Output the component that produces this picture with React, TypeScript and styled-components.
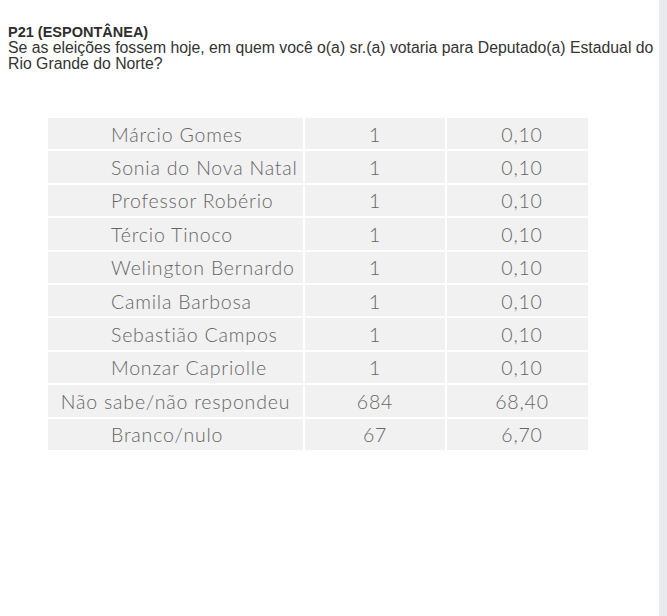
import React from "react";
import styled, { createGlobalStyle } from "styled-components";

const Global = createGlobalStyle`
  html, body {
    margin: 0;
    padding: 0;
    background: #ffffff;
  }
`;

const Page = styled.div`
  display: flex;
  width: 667px;
  height: 616px;
`;

const Main = styled.div`
  flex: 1;
  padding: 24px 0 0 8px;
`;

const Rail = styled.div`
  width: 8px;
  background: #e9eaee;
`;

const Title = styled.div`
  font-family: "Liberation Sans", Arial, sans-serif;
  font-weight: 700;
  font-size: 14.5px;
  line-height: 16px;
  color: #2e2e2e;
`;

const Question = styled.div`
  font-family: "Liberation Sans", Arial, sans-serif;
  font-size: 15.8px;
  line-height: 16px;
  color: #333333;
`;

const Table = styled.table`
  margin: 44px 0 0 38px;
  border-collapse: separate;
  border-spacing: 2px;
  font-family: Lato, "Open Sans", sans-serif;
  font-weight: 300;
  font-size: 19.5px;
  letter-spacing: 0.8px;
  color: #666666;
`;

const Cell = styled.td<{ $w: number; $align?: string; $pad?: number }>`
  width: ${(p) => p.$w}px;
  height: 31.4px;
  padding: 1px 0 0 ${(p) => p.$pad ?? 0}px;
  box-sizing: border-box;
  background: #f1f1f1;
  text-align: ${(p) => p.$align ?? "center"};
  white-space: nowrap;
`;

const rows: [string, string, string, boolean?][] = [
  ["Márcio Gomes", "1", "0,10"],
  ["Sonia do Nova Natal", "1", "0,10"],
  ["Professor Robério", "1", "0,10"],
  ["Tércio Tinoco", "1", "0,10"],
  ["Welington Bernardo", "1", "0,10"],
  ["Camila Barbosa", "1", "0,10"],
  ["Sebastião Campos", "1", "0,10"],
  ["Monzar Capriolle", "1", "0,10"],
  ["Não sabe/não respondeu", "684", "68,40", true],
  ["Branco/nulo", "67", "6,70"],
];

export default function App() {
  return (
    <Page>
      <Global />
      <Main>
        <Title>P21 (ESPONTÂNEA)</Title>
        <Question>
          Se as eleições fossem hoje, em quem você o(a) sr.(a) votaria para Deputado(a) Estadual do
          <br />
          Rio Grande do Norte?
        </Question>
        <Table>
          <tbody>
            {rows.map(([name, n, pct, wide]) => (
              <tr key={name}>
                <Cell $w={255} $align={wide ? "center" : "left"} $pad={wide ? 0 : 63}>
                  {name}
                </Cell>
                <Cell $w={140}>{n}</Cell>
                <Cell $w={141} $pad={9}>{pct}</Cell>
              </tr>
            ))}
          </tbody>
        </Table>
      </Main>
      <Rail />
    </Page>
  );
}
